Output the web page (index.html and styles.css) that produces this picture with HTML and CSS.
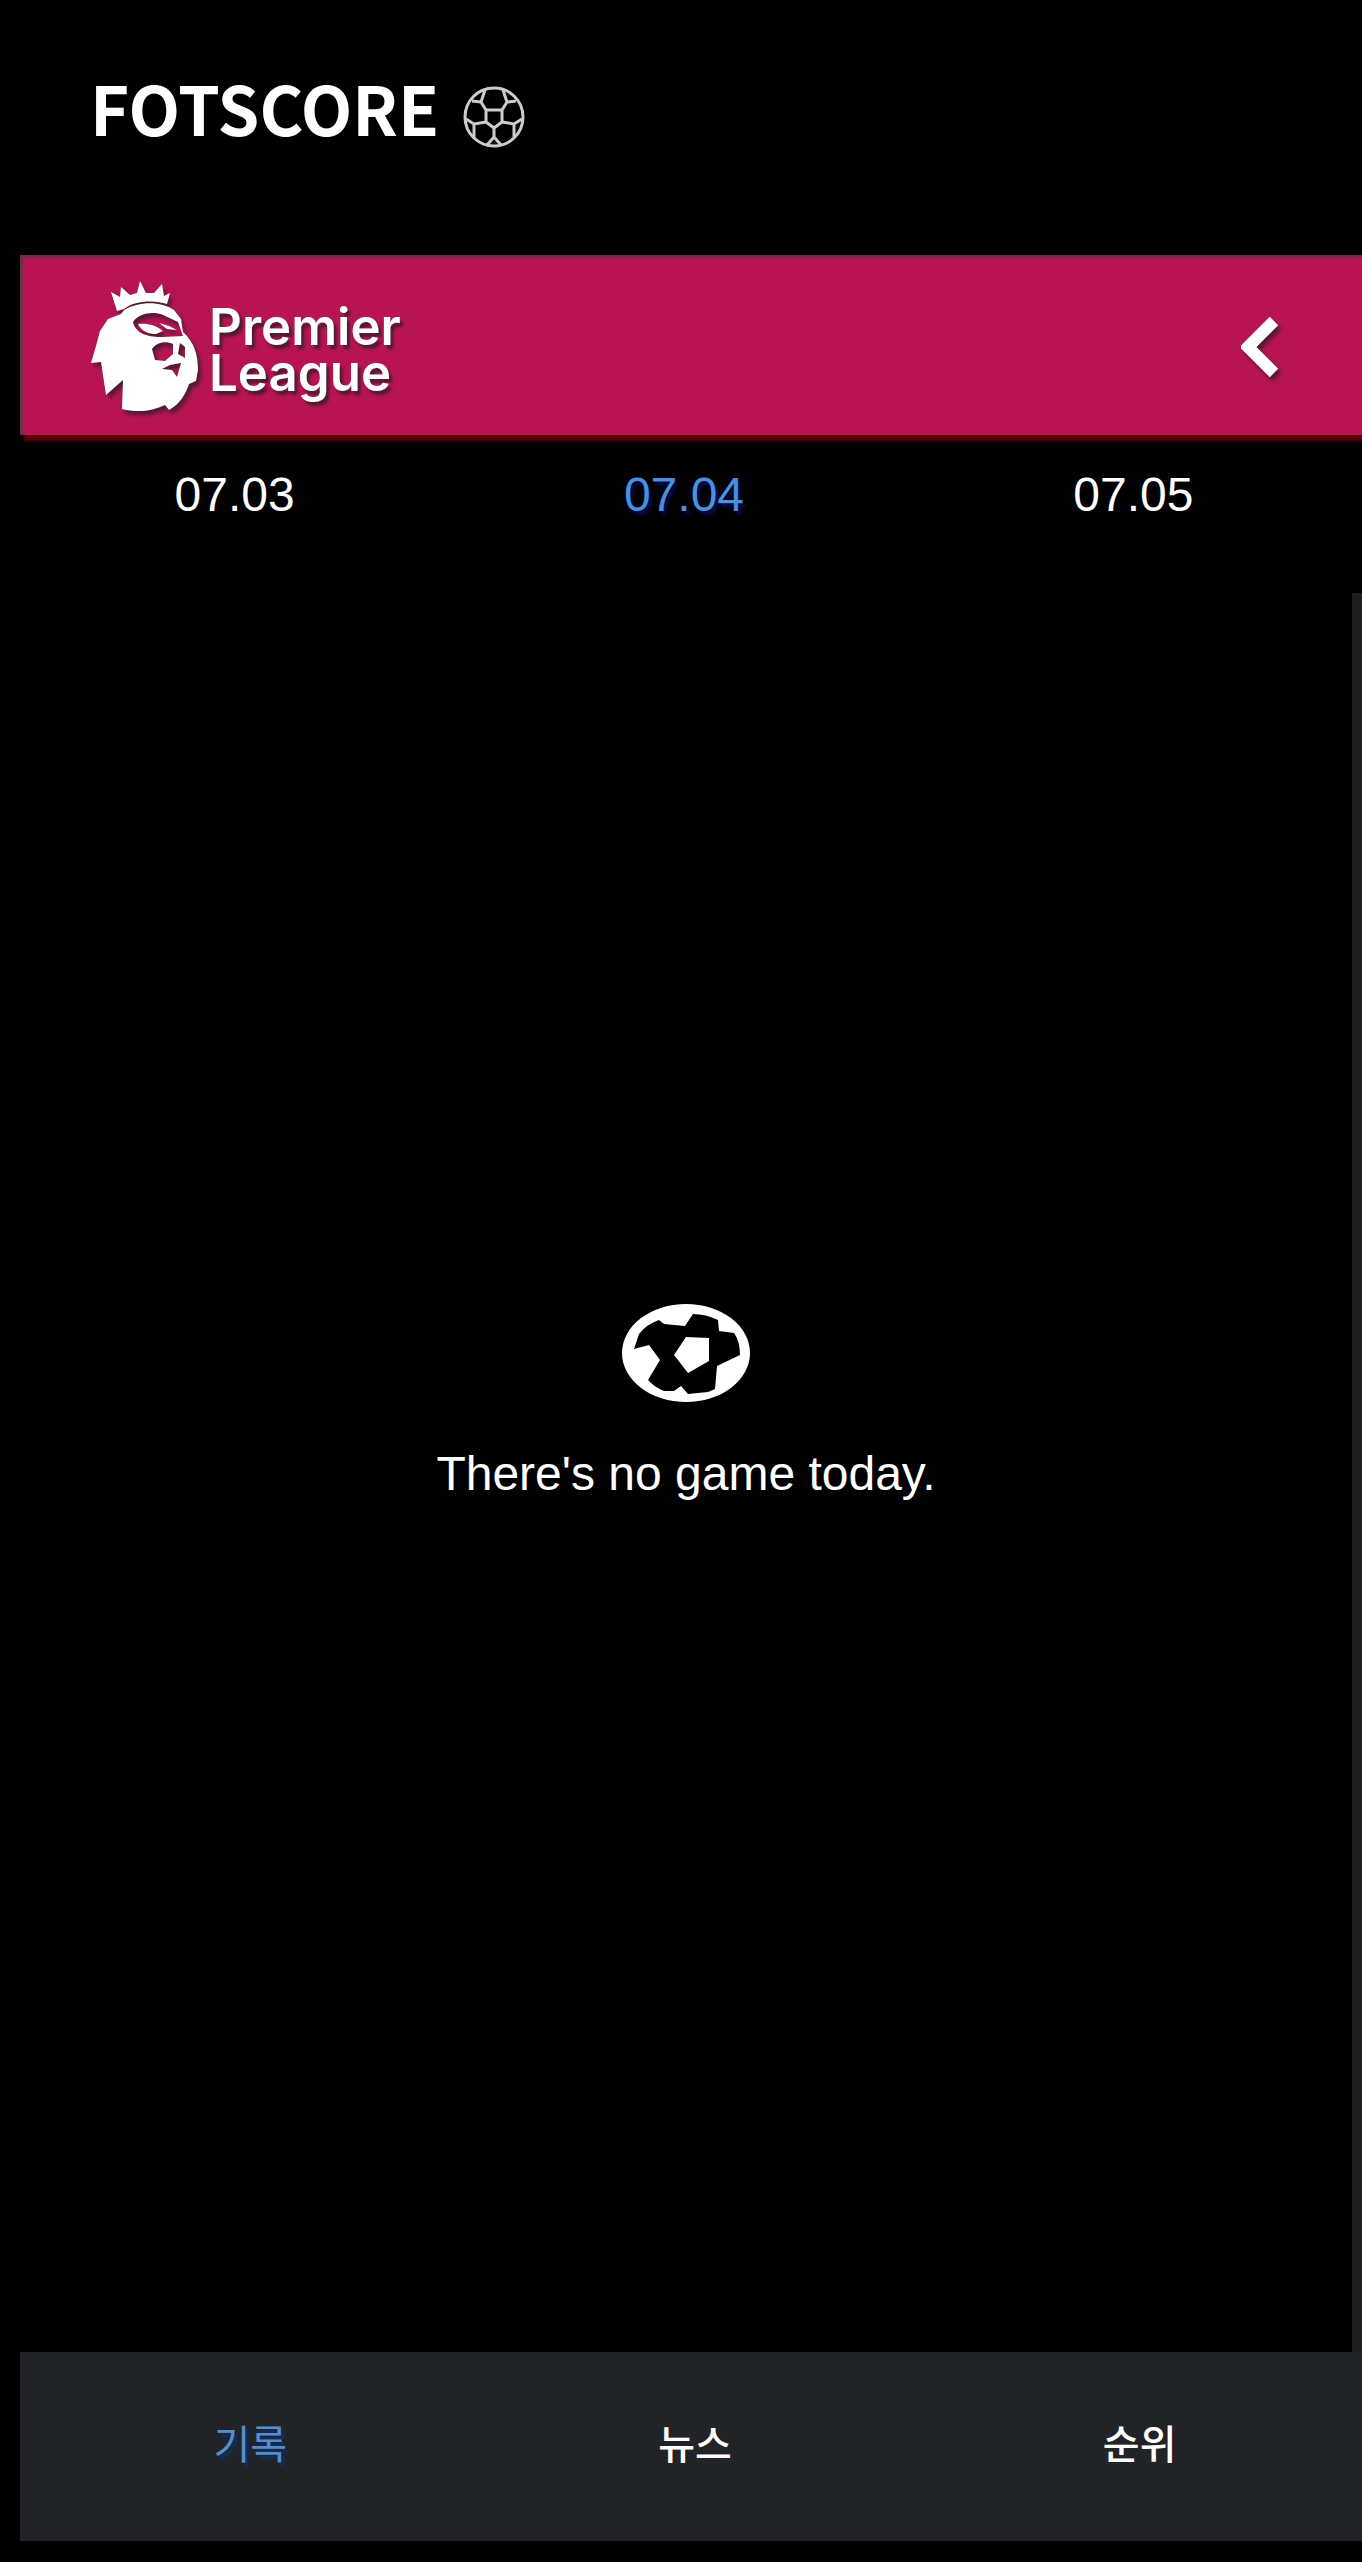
FILE: index.html
```html
<!DOCTYPE html>
<html lang="ko">
<head>
<meta charset="utf-8">
<meta name="viewport" content="width=device-width, initial-scale=1">
<title>FOTSCORE</title>
<link rel="stylesheet" href="styles.css">
</head>
<body>
<div class="app">
  <header class="header">
    <h1 class="title">FOTSCORE</h1>
    <svg class="title-ball" viewBox="0 0 62 62" aria-hidden="true">
      <circle cx="31" cy="31" r="29"/>
      <path d="M23 24h16v12l-8 6-8-6zM23 24l-5-8 4-12M39 24l5-8-4-12M18 16l-9-1M44 16l9-1M23 36l-12 2M39 36l12 2M11 38l-8-5M51 38l8-5M11 38v13M51 38v13M31 42v9M31 51l-7 8M31 51l7 8"/>
    </svg>
  </header>
  <div class="league">
    <div class="league-brand">
      <svg class="lion" viewBox="0 0 108 132" aria-hidden="true">
        <path class="lion-fill" d="M20 11l9 5 1-10 9 8 7-2 3-12 6 12 8 0 8-9 2 12 6-3-3 11c-12-4-32-4-43 5l-7 2z"/>
        <path class="lion-fill" fill-rule="evenodd" d="M33 29c15-9 37-9 50 0l7 9 2 13c11 10 15 22 15 38l-2 11-7 3c-3 10-10 21-20 26l-4-5c-12 6-28 8-43 4l1-29-17 15-5-33-10 1 5-17 4-15 8-12 13-5zM42 41c3 13 17 15 30 15l20-1-5-14-15-7c-10-4-24-2-30 7zM61 68l3 11 10 1 8-7v-10c-8-4-17-1-21 5zM89 62l-2 11 7 4V66zM71 88l10 1 5 7 4-14-11 2z"/>
        <path class="lion-fill" d="M47 43c9-1 18 1 25 7l-7 3c-7 0-14-2-18-10zM68 42l10 3 8 4-10-1z"/>
      </svg>
      <span class="wordmark">Premier<br>League</span>
    </div>
    <button class="toggle" type="button" aria-label="리그 선택">
      <svg class="chevron" viewBox="0 0 40 62" aria-hidden="true"><path d="M33 5L7 31l26 26"/></svg>
    </button>
  </div>
  <div class="dates">
    <button class="date" type="button">07.03</button>
    <button class="date is-active" type="button">07.04</button>
    <button class="date" type="button">07.05</button>
  </div>
  <main class="games">
    <svg class="empty-ball" viewBox="0 0 128 98" aria-hidden="true">
      <ellipse class="ball-white" cx="64" cy="49" rx="64" ry="49"/>
      <path class="ball-black" d="M12 45L17 30Q25 20 37 16L42 20 63 22 71 10Q84 10 96 16L97 27 112 29Q118 37 118 51L95 62 93 85 86 88 66 90 59 82 52 87 42 87Q32 83 26 76L38 56 27 41z"/>
      <path class="ball-white" d="M64 33l23 1v23L66 69 52 51z"/>
    </svg>
    <p class="empty-text">There's no game today.</p>
  </main>
  <nav class="tabs">
    <a class="tab is-active" href="#record">기록</a>
    <a class="tab" href="#news">뉴스</a>
    <a class="tab" href="#rank">순위</a>
  </nav>
</div>
</body>
</html>
```
FILE: styles.css
```css
* { box-sizing: border-box; }

body {
  margin: 0;
  background: #000;
  color: #fff;
  font-family: "Liberation Sans", "Noto Sans CJK KR", sans-serif;
}

button {
  padding: 0;
  border: 0;
  background: none;
  color: inherit;
  font: inherit;
  cursor: pointer;
}

.app {
  display: flex;
  flex-direction: column;
  min-height: 100vh;
  padding-bottom: 21px;
}

.header {
  display: flex;
  align-items: flex-end;
  gap: 24px;
  padding: 66px 90px 107px;
}

.title {
  margin: 0;
  font-family: "Noto Sans CJK KR", sans-serif;
  font-size: 67px;
  font-weight: 700;
  line-height: 82px;
}

.title-ball {
  width: 62px;
  height: 62px;
  fill: none;
  stroke: #ccc;
  stroke-width: 3;
}

.league {
  display: flex;
  align-items: center;
  justify-content: space-between;
  height: 180px;
  margin-left: 20px;
  padding: 0 81px 0 68px;
  border-top: 3px solid #6e2f4a;
  border-left: 3px solid #6e2f4a;
  background: #b81454;
  box-shadow: 4px 6px 2px #5c0008;
}

.league-brand {
  display: flex;
  align-items: center;
  gap: 10px;
}

.lion {
  width: 108px;
  height: 132px;
  filter: drop-shadow(3px 4px 2px #4a1c30);
}

.lion-fill { fill: #fff; }

.wordmark {
  padding-top: 6px;
  font-family: Inter, sans-serif;
  font-size: 51px;
  font-weight: 600;
  line-height: 46px;
  text-shadow: 3px 4px 3px #4a1c30;
}

.chevron {
  display: block;
  width: 40px;
  height: 62px;
  fill: none;
  stroke: #fff;
  stroke-width: 12;
  filter: drop-shadow(3px 4px 2px #4a1c30);
}

.dates {
  display: grid;
  grid-template-columns: repeat(3, 1fr);
  padding: 28px 4px 66px 10px;
}

.date {
  font-size: 48px;
  line-height: 64px;
}

.date.is-active {
  color: #4a90dc;
  text-shadow: 3px 4px 2px #000850;
}

.games {
  display: flex;
  flex: 1;
  flex-direction: column;
  align-items: center;
  justify-content: center;
  gap: 40px;
  margin-left: 20px;
  padding-bottom: 136px;
  border-right: 10px solid #1e1e1e;
}

.empty-ball {
  width: 128px;
  height: 98px;
}

.ball-white { fill: #fff; }
.ball-black { fill: #000; }

.empty-text {
  margin: 0;
  font-size: 48px;
  line-height: 64px;
}

.tabs {
  display: grid;
  grid-template-columns: repeat(3, 1fr);
  margin-left: 20px;
  padding: 60px 0 69px 8px;
  background: #222327;
}

.tab {
  color: #fff;
  font-family: "Noto Sans CJK KR", sans-serif;
  font-size: 40px;
  font-weight: 500;
  line-height: 60px;
  text-align: center;
  text-decoration: none;
}

.tab.is-active {
  color: #5a8cc8;
  font-weight: 400;
  text-shadow: 3px 4px 2px #08306e;
}
```
